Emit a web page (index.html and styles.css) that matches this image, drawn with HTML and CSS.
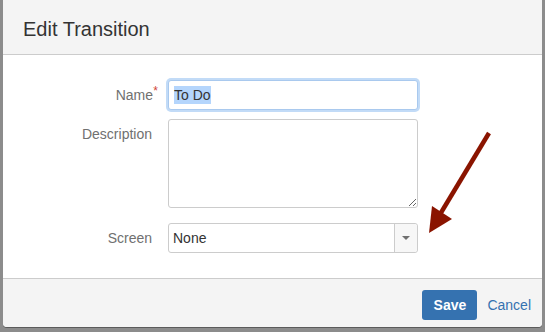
FILE: index.html
```html
<!DOCTYPE html>
<html>
<head>
<meta charset="utf-8">
<link rel="stylesheet" href="styles.css">
</head>
<body>
<div class="dialog">
  <div class="dialog-header"><h2 class="dialog-title">Edit Transition</h2></div>
  <div class="dialog-body">
    <form class="form-grid">
      <label class="field-label">Name<span class="req">*</span></label>
      <div class="text-input focused"><span class="selected">To Do</span></div>
      <label class="field-label">Description</label>
      <textarea class="textarea"></textarea>
      <label class="field-label">Screen</label>
      <div class="select">
        <span class="select-value">None</span>
        <span class="select-toggle"><span class="caret"></span></span>
      </div>
    </form>
    <svg class="annotation" width="80" height="120" viewBox="0 0 80 120">
      <line x1="69" y1="13" x2="19" y2="96" stroke="#8a1400" stroke-width="4.5"/>
      <polygon points="9,113 12,86 32,99" fill="#8a1400"/>
    </svg>
  </div>
  <div class="dialog-footer">
    <button class="btn-primary" type="button">Save</button>
    <a class="link-cancel" href="#">Cancel</a>
  </div>
</div>
</body>
</html>
```

FILE: styles.css
```css
html, body {
  margin: 0;
  padding: 0;
}
body {
  width: 545px;
  height: 332px;
  overflow: hidden;
  background: #8c8c8c;
  font-family: "Liberation Sans", Arial, sans-serif;
  font-size: 14px;
  color: #333;
}
.dialog {
  margin-left: 3px;
  width: 539px;
  height: 327px;
  background: #fff;
  border-radius: 0 0 4px 4px;
  overflow: hidden;
  box-shadow: 0 1px 0 rgba(0,0,0,0.35);
  display: flex;
  flex-direction: column;
}
.dialog-header {
  height: 55px;
  background: #f4f4f4;
  border-bottom: 1px solid #cccccc;
  display: flex;
  align-items: center;
  padding: 4px 0 0 20px;
  box-sizing: border-box;
}
.dialog-title {
  margin: 0;
  font-size: 20px;
  font-weight: normal;
  color: #333;
}
.dialog-body {
  position: relative;
  padding: 25px 0 23px 0;
  flex: 1;
}
.form-grid {
  display: grid;
  grid-template-columns: 149px 250px;
  column-gap: 16px;
  margin: 0;
}
.field-label {
  text-align: right;
  line-height: 30px;
  color: #707070;
}
.req {
  color: #d04437;
  font-size: 12px;
  vertical-align: 5px;
  display: inline-block;
  width: 5px;
  margin-right: -6px;
  line-height: 10px;
}
.text-input {
  height: 30px;
  box-sizing: border-box;
  border: 1px solid #a9c9ee;
  border-radius: 3px;
  box-shadow: 0 0 0 2px #c2dbf7;
  padding: 0 5px;
  line-height: 28px;
  margin-bottom: 9px;
  background: #fff;
}
.selected {
  background: #b4d5fc;
  color: #333;
  padding: 1px 0;
}
.textarea {
  display: block;
  height: 89px;
  width: 250px;
  box-sizing: border-box;
  border: 1px solid #cccccc;
  border-radius: 3px;
  margin: 0 0 15px 0;
  padding: 4px 5px;
  font-family: inherit;
  font-size: 14px;
  resize: both;
}
.select {
  height: 30px;
  box-sizing: border-box;
  border: 1px solid #cccccc;
  border-radius: 3px;
  display: flex;
  background: #fff;
}
.select-value {
  flex: 1;
  line-height: 28px;
  padding-left: 4px;
  color: #333;
}
.select-toggle {
  width: 22px;
  border-left: 1px solid #cccccc;
  background: #f7f7f7;
  display: flex;
  align-items: center;
  justify-content: center;
  border-radius: 0 3px 3px 0;
}
.caret {
  width: 0;
  height: 0;
  border-left: 4px solid transparent;
  border-right: 4px solid transparent;
  border-top: 4px solid #707070;
}
.annotation {
  position: absolute;
  left: 417px;
  top: 65px;
}
.dialog-footer {
  height: 49px;
  box-sizing: border-box;
  background: #f4f4f4;
  border-top: 1px solid #cccccc;
  display: flex;
  justify-content: flex-end;
  align-items: flex-start;
  padding: 11px 11px 0 0;
  gap: 10px;
}
.btn-primary {
  height: 30px;
  width: 55px;
  border: none;
  border-radius: 3px;
  background: #3572b0;
  color: #fff;
  font-family: inherit;
  font-size: 14px;
  font-weight: bold;
  padding: 0;
}
.link-cancel {
  color: #3572b0;
  text-decoration: none;
  line-height: 30px;
}
```
